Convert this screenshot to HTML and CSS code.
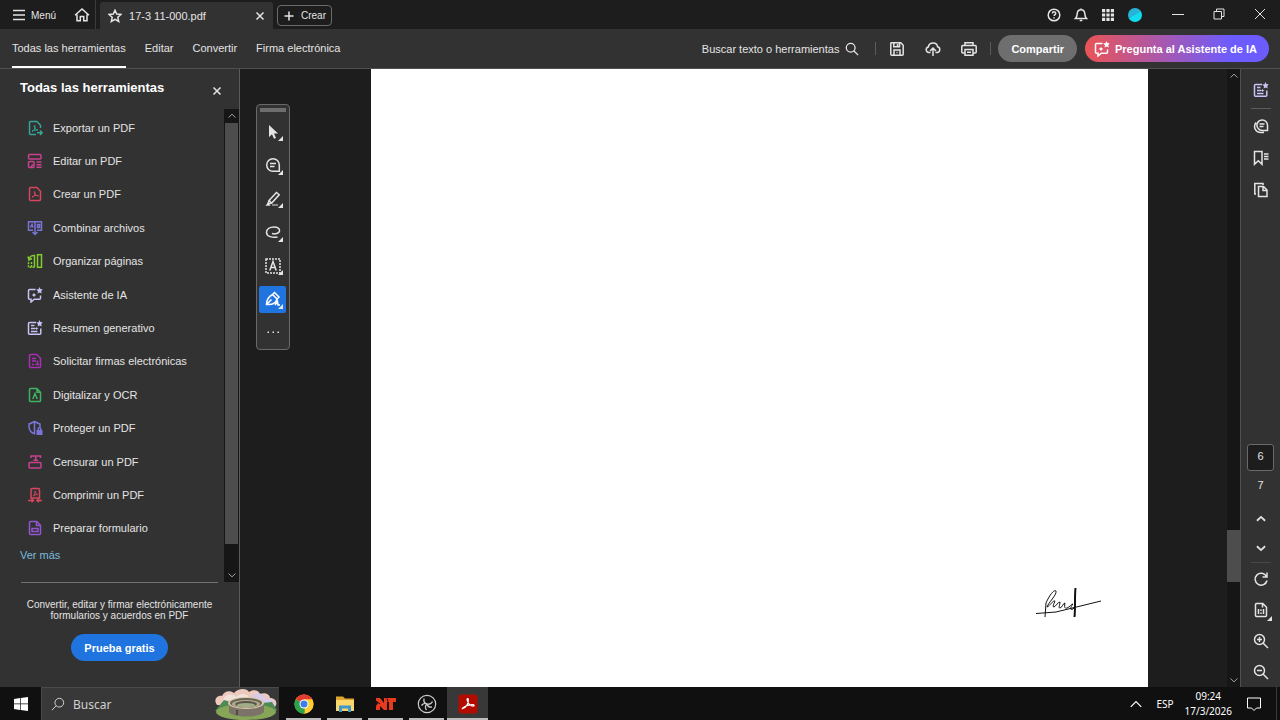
FILE: index.html
```html
<!DOCTYPE html>
<html lang="es">
<head>
  <meta charset="UTF-8" />
  <meta name="viewport" content="width=device-width, initial-scale=1.0" />
  <title>17-3 11-000.pdf</title>
  <link rel="stylesheet" href="styles.css">
</head>
<body>
  <svg class="sprite" aria-hidden="true">
    <symbol id="close" viewBox="0 0 12 12"><path d="M2.5 2.5l7 7M9.5 2.5l-7 7"/></symbol>
    <symbol id="up" viewBox="0 0 12 12"><path d="M2.500 7.500L6 4.200l3.500 3.300"/></symbol>
    <symbol id="down" viewBox="0 0 12 12"><path d="M2.500 4.500L6 7.800l3.500-3.300"/></symbol>
    <symbol id="search" viewBox="0 0 16 16"><circle cx="6.500" cy="6.500" r="5"/><path d="M10 10l5 5"/></symbol>
    <symbol id="pdf" viewBox="0 0 16 16"><path d="M3.500 1.500h6.300l3.700 3.700v8.300a1 1 0 0 1-1 1h-9a1 1 0 0 1-1-1v-11a1 1 0 0 1 1-1z"/><path stroke-width="1" d="M5 11.300c2-.8 3.400-3 3-5.300-.3-1.200-1-.7-.8.3.5 2 1.800 3.500 3.800 3.800.9 0 .5-.9-.6-.8-2 .1-3.600.6-5.400 2z"/></symbol>
    <symbol id="export" viewBox="0 0 16 16"><path d="M13.500 8V5.200L9.800 1.500H3.500a1 1 0 0 0-1 1v11a1 1 0 0 0 1 1H9M10 12.700h5M13 10.500l2.200 2.200-2.200 2.200"/><path stroke-width="1" d="M5 11.300c2-.8 3.400-3 3-5.300-.3-1.200-1-.7-.8.3.5 2 1.800 3.500 3.800 3.800-2-.4-4 .2-6 1.200z"/></symbol>
    <symbol id="edit" viewBox="0 0 16 16"><rect x="1.500" y="1.500" width="12.500" height="4.500" rx="1"/><rect x="1.500" y="8.500" width="5.500" height="6" rx="1"/><path d="M9.500 9h5M9.500 11.700h5M9.500 14.300h5M4 14l2-2.500"/></symbol>
    <symbol id="combine" viewBox="0 0 16 16"><path d="M8 1.800H1.500v8.500H6M8 1.800h6.500v8.500H10M8 1.800v12.700M5.500 12l2.500 2.500 2.500-2.500M3.500 7.500L5 4.500l1 3M10.500 4.500v3h2v-3z"/></symbol>
    <symbol id="organize" viewBox="0 0 16 16"><rect x="10.500" y="1.700" width="4" height="12.600"/><path d="M2 6.500a5 5 0 0 1 5.500-4V14M1 3.500L2 7l3-1.500"/><path stroke-dasharray="2 1" d="M7.500 14.200H1.500V8M4.500 14V8"/></symbol>
    <symbol id="ai" viewBox="0 0 16 16"><path d="M8.500 2.500h-6a1 1 0 0 0-1 1v7.800a1 1 0 0 0 1 1H4V15l3.200-2.700h5.300a1 1 0 0 0 1-1V8.500"/><path class="solid" d="M12.500 0l.9 2.100 2.300.2-1.500 1.700.6 2.400-2.100-1-2.100 1.200.4-2.400L9.200 2.500l2.300-.3zM7 5.800l.8 1.500 1.600.7-1.600.7L7 10.200l-.8-1.500L4.600 8l1.600-.7z"/></symbol>
    <symbol id="summary" viewBox="0 0 16 16"><path d="M9 2.500H2.500a1 1 0 0 0-1 1v9.800a1 1 0 0 0 1 1h10.300a1 1 0 0 0 1-1V8.500M4 5.500h3.500M4 8.500h4M4 11.500h6.500"/><path class="solid" d="M12.500 0l.9 2.100 2.300.2-1.500 1.700.6 2.400-2.100-1-2.100 1.200.4-2.400L9.200 2.500l2.300-.3zM9.500 7l.8 1 1.200.5-1.200.5-.8 1-.8-1-1-.5 1-.5z"/></symbol>
    <symbol id="sign" viewBox="0 0 16 16"><path d="M3.500 1.500h6.300l3.700 3.700v8.300a1 1 0 0 1-1 1h-9a1 1 0 0 1-1-1v-11a1 1 0 0 1 1-1zM5 5.500h4M5 8h4M5 11.500h2M8.500 11.500H12M10.500 7.500V12"/></symbol>
    <symbol id="ocr" viewBox="0 0 16 16"><path d="M3.500 1.500h6.300l3.700 3.700v8.300a1 1 0 0 1-1 1h-9a1 1 0 0 1-1-1v-11a1 1 0 0 1 1-1zM10 1.500v3.700h3.500M5.800 12L8 6.500l2.200 5.500"/></symbol>
    <symbol id="protect" viewBox="0 0 16 16"><path d="M8 14C3.500 12.500 2 10 2 6.500V4C4 3.500 5.500 2.500 7.500 1.500 9.500 2.500 11 3.500 13 4v3M7.500 1.500V14M11.200 10.500V9a1.300 1.300 0 0 1 2.600 0v1.500"/><path class="solid" d="M9.500 10h6v5h-6z"/></symbol>
    <symbol id="redact" viewBox="0 0 16 16"><rect x="2" y="8.500" width="12" height="5.500" rx="1"/><path d="M4 4V2h9.500v2M8.700 2v4.500M6.500 6.200h4.500"/></symbol>
    <symbol id="compress" viewBox="0 0 16 16"><path d="M4 11V2.500a1 1 0 0 1 1-1h6.500a1 1 0 0 1 1 1V11zM1 13.500h5M15 13.500h-5M4.500 11.800l2 1.700-2 1.700M12 11.800l-2 1.700 2 1.700"/><path stroke-width="1" d="M6 9c1.500-.8 2.300-2.500 2-5 .3 2 1.300 3.200 2.600 3.500-1.600 0-3.200.5-4.600 1.500z"/></symbol>
    <symbol id="form" viewBox="0 0 16 16"><path d="M3.500 1.500h6.300l3.700 3.700v8.300a1 1 0 0 1-1 1h-9a1 1 0 0 1-1-1v-11a1 1 0 0 1 1-1zM9.500 1.500v4h4"/><rect x="5" y="8.500" width="6" height="3"/></symbol>
  </svg>

  <header class="titlebar">
    <button class="menu-btn">
      <svg class="icon" viewBox="0 0 14 14"><path d="M1 2.500h12M1 7h12M1 11.500h12"/></svg>Menú
    </button>
    <button class="home-btn" aria-label="Inicio">
      <svg class="icon" viewBox="0 0 16 16"><path d="M1 8.300L8 2l7 6.300M3 7.500v6.300h3.300V9.500h3.400v4.300H13V7.500"/></svg>
    </button>
    <div class="tab">
      <svg class="icon" viewBox="0 0 14 14"><path d="M7 1.200l1.700 3.900 4.300.4-3.200 2.800.9 4.200L7 10.300l-3.700 2.200.9-4.200L1 5.500l4.300-.4z"/></svg>
      <span>17-3 11-000.pdf</span>
      <button aria-label="Cerrar pestaña"><svg class="icon small" viewBox="0 0 12 12"><use href="#close"/></svg></button>
    </div>
    <button class="create-btn">
      <svg class="icon small" viewBox="0 0 12 12"><path d="M6 1.500v9M1.500 6h9"/></svg>Crear
    </button>
    <div class="title-actions">
      <button aria-label="Ayuda"><svg class="icon" viewBox="0 0 14 14"><circle cx="7" cy="7" r="5.800"/><path d="M5.400 5.500c0-2.200 3.300-2.200 3.300-.1 0 1.200-1.600 1.300-1.600 2.600M7 9.300v1.200"/></svg></button>
      <button aria-label="Notificaciones"><svg class="icon" viewBox="0 0 14 14"><path d="M1.500 10.500c1.500-1.300 1.500-3 1.700-5C3.500 3 5 1.700 7 1.700s3.500 1.300 3.800 3.800c.2 2 .2 3.700 1.700 5zM5.700 12.500h2.600M7 .5v1"/></svg></button>
      <button aria-label="Aplicaciones"><svg class="icon" viewBox="0 0 14 14"><path class="solid" d="M1 1h3.200v3.200H1zM5.400 1h3.200v3.200H5.400zM9.800 1H13v3.200H9.800zM1 5.400h3.200v3.200H1zM5.400 5.400h3.200v3.200H5.400zM9.800 5.400H13v3.200H9.800zM1 9.800h3.200V13H1zM5.400 9.800h3.200V13H5.400zM9.800 9.800H13V13H9.800z"/></svg></button>
      <button aria-label="Cuenta"><span class="avatar"></span></button>
    </div>
    <div class="window-actions">
      <button aria-label="Minimizar"><svg class="icon thin" viewBox="0 0 14 14"><path d="M1 7.500h12"/></svg></button>
      <button aria-label="Restaurar"><svg class="icon thin" viewBox="0 0 14 14"><path d="M2 4.500h7.500V12H2zM4.500 4.500V2H12v7.500H9.500"/></svg></button>
      <button aria-label="Cerrar"><svg class="icon thin" viewBox="0 0 14 14"><path d="M2 2l10 10M12 2L2 12"/></svg></button>
    </div>
  </header>

  <nav class="toolbar">
    <a class="active" href="#herramientas">Todas las herramientas</a>
    <a href="#editar">Editar</a>
    <a href="#convertir">Convertir</a>
    <a href="#firma">Firma electrónica</a>
    <div class="toolbar-right">
      <button class="find-btn">Buscar texto o herramientas <svg class="icon" viewBox="0 0 16 16"><use href="#search"/></svg></button>
      <span class="sep"></span>
      <div class="file-actions">
        <button aria-label="Guardar"><svg class="icon big" viewBox="0 0 16 16"><path d="M2.500 1.800h9.300l2.400 2.400v9a1 1 0 0 1-1 1H2.800a1 1 0 0 1-1-1V2.500a.7.7 0 0 1 .7-.7zM4.800 2v3.800h5.700V2M5 14V9h6v5M8.500 3v2M7.500 11.500h1"/></svg></button>
        <button aria-label="Subir"><svg class="icon big" viewBox="0 0 16 16"><path d="M5.500 11.500H3.800A2.800 2.800 0 0 1 3.300 6C3.800 3.300 5.700 2 8 2s4.200 1.300 4.600 3.800a2.900 2.900 0 0 1-.5 5.700h-1.600M8 15V7.500M5 10l3-3 3 3"/></svg></button>
        <button aria-label="Imprimir"><svg class="icon big" viewBox="0 0 16 16"><path d="M4 4.500V1.800h8v2.700M4 12H1.800a1 1 0 0 1-1-1V5.500a1 1 0 0 1 1-1h12.400a1 1 0 0 1 1 1V11a1 1 0 0 1-1 1H12M4 8.500h8v5.700H4zM6 11.300h4"/></svg></button>
      </div>
      <span class="sep"></span>
      <button class="pill share">Compartir</button>
      <button class="pill assistant"><svg class="icon big" viewBox="0 0 16 16"><use href="#ai"/></svg>Pregunta al Asistente de IA</button>
    </div>
  </nav>

  <main class="workspace">
    <aside class="sidebar">
      <div class="sidebar-head">
        <h2>Todas las herramientas</h2>
        <button aria-label="Cerrar panel"><svg class="icon small" viewBox="0 0 12 12"><use href="#close"/></svg></button>
      </div>
      <div class="sidebar-body">
        <div class="tools">
          <ul>
            <li><a href="#"><svg class="icon teal" viewBox="0 0 16 16"><use href="#export"/></svg>Exportar un PDF</a></li>
            <li><a href="#"><svg class="icon pink" viewBox="0 0 16 16"><use href="#edit"/></svg>Editar un PDF</a></li>
            <li><a href="#"><svg class="icon red" viewBox="0 0 16 16"><use href="#pdf"/></svg>Crear un PDF</a></li>
            <li><a href="#"><svg class="icon indigo" viewBox="0 0 16 16"><use href="#combine"/></svg>Combinar archivos</a></li>
            <li><a href="#"><svg class="icon lime" viewBox="0 0 16 16"><use href="#organize"/></svg>Organizar páginas</a></li>
            <li><a href="#"><svg class="icon lilac" viewBox="0 0 16 16"><use href="#ai"/></svg>Asistente de IA</a></li>
            <li><a href="#"><svg class="icon lilac" viewBox="0 0 16 16"><use href="#summary"/></svg>Resumen generativo</a></li>
            <li><a href="#"><svg class="icon magenta" viewBox="0 0 16 16"><use href="#sign"/></svg>Solicitar firmas electrónicas</a></li>
            <li><a href="#"><svg class="icon green" viewBox="0 0 16 16"><use href="#ocr"/></svg>Digitalizar y OCR</a></li>
            <li><a href="#"><svg class="icon indigo" viewBox="0 0 16 16"><use href="#protect"/></svg>Proteger un PDF</a></li>
            <li><a href="#"><svg class="icon pink" viewBox="0 0 16 16"><use href="#redact"/></svg>Censurar un PDF</a></li>
            <li><a href="#"><svg class="icon red" viewBox="0 0 16 16"><use href="#compress"/></svg>Comprimir un PDF</a></li>
            <li><a href="#"><svg class="icon violet" viewBox="0 0 16 16"><use href="#form"/></svg>Preparar formulario</a></li>
          </ul>
          <a class="more" href="#">Ver más</a>
        </div>
        <div class="scrollbar">
          <svg class="icon arrow" viewBox="0 0 12 12"><use href="#up"/></svg>
          <div class="thumb"></div>
          <div class="track"></div>
          <svg class="icon arrow" viewBox="0 0 12 12"><use href="#down"/></svg>
        </div>
      </div>
      <div class="promo">
        <p>Convertir, editar y firmar electrónicamente formularios y acuerdos en PDF</p>
        <button class="pill trial">Prueba gratis</button>
      </div>
    </aside>

    <section class="document">
      <div class="quick-tools">
        <span class="grip"></span>
        <button class="has-more" aria-label="Seleccionar"><svg class="icon big" viewBox="0 0 16 16"><path class="solid" d="M4 1v12l3-2.700 2 4.500 2-.9-2-4.400h4z"/></svg></button>
        <button class="has-more" aria-label="Comentar"><svg class="icon big" viewBox="0 0 16 16"><path d="M14.300 14.300H8A6.300 6.300 0 1 1 14.300 8zM5 6.500h6M5 9.500h4.500"/></svg></button>
        <button class="has-more" aria-label="Resaltar"><svg class="icon big" viewBox="0 0 16 16"><path d="M4 9.500l7.500-8 2.700 2.300-7.500 8.200L3 13zM4 9.500l2.700 2.500"/><path class="solid" d="M.5 14.800L3 11.500 5.500 14.800z"/><path stroke="#888" stroke-width="2" d="M7 14h6"/></svg></button>
        <button class="has-more" aria-label="Dibujar"><svg class="icon big" viewBox="0 0 16 16"><path d="M12.500 13c-5 1-11-.5-11-4.500C1.500 5 5 3 9 3c3.500 0 6 1.500 5.500 4S10 10.500 7 9.500"/></svg></button>
        <button class="has-more" aria-label="Texto"><svg class="icon big" viewBox="0 0 16 16"><path stroke-dasharray="2 1" d="M1 1h14v14H1z"/><path d="M4.800 12.500L8 3.500l3.200 9M6 9.500h4"/></svg></button>
        <button class="has-more selected" aria-label="Firmar"><svg class="icon big" viewBox="0 0 16 16"><path d="M1.500 13.500C1.500 9 3 6 7.500 3.500L12 8c-1 4-5 6-10.500 5.500zM7.500 3.500L9.500 1.500 14 6l-2 2M1.500 13.500l5-5M10 14l2.500-3.500.5 3.500h2"/></svg></button>
        <button aria-label="Más"><svg class="icon big" viewBox="0 0 16 16"><path class="solid" d="M2.500 7.500H4V9H2.500zM7.500 7.500H9V9H7.500zM12.500 7.500H14V9h-1.500z"/></svg></button>
      </div>
      <div class="page">
        <svg class="signature" viewBox="0 0 66 34"><path d="M0 26.500L20 25 65 14M9 30l1-14C13 9 18 2 20 4c1 4-8 12-9 16 3-1 6-7 8-6-1 3-3 6-1 6 2-1 4-5 6-5 0 3-2 6 0 6s3-5 5-5c-1 4 0 6 2 5 3-1 4-4 6-4-2 2-4 7 0 5 1-1 2-3 2-5"/><path stroke-width="2" d="M39.500 1c-1 8 0 20-1 29"/></svg>
      </div>
      <div class="scrollbar doc-scroll">
        <svg class="icon arrow" viewBox="0 0 12 12"><use href="#up"/></svg>
        <div class="track"></div>
        <div class="thumb"></div>
        <div class="track rest"></div>
        <svg class="icon arrow" viewBox="0 0 12 12"><use href="#down"/></svg>
      </div>
    </section>

    <aside class="rail">
      <button aria-label="Resumen generativo"><svg class="icon big lilac" viewBox="0 0 16 16"><use href="#summary"/></svg></button>
      <hr>
      <button aria-label="Comentarios"><svg class="icon big" viewBox="0 0 16 16"><path d="M14.500 12.500H9a5.300 5.300 0 1 1 5.500-5.300zM6.500 6h5M6.500 8.500h4M3 4.500C0 8.500 2 14.500 8 14.500h3"/></svg></button>
      <button aria-label="Marcadores"><svg class="icon big" viewBox="0 0 16 16"><path d="M1.500 1.500H9v12.800l-3.700-3.500-3.800 3.500zM11 4h4.500M11 6.500h4.500M11 9h4.500"/></svg></button>
      <button aria-label="Páginas"><svg class="icon big" viewBox="0 0 16 16"><path d="M5.500 4.500h5l3.500 3.500v6.500H5.500zM10 4.500v4h4M3 12H1.800V1.500H10V3"/></svg></button>
      <label class="page-number"><input type="text" value="6" aria-label="Página actual"></label>
      <span class="page-total">7</span>
      <button class="step" aria-label="Página anterior"><svg class="icon" viewBox="0 0 12 12"><use href="#up"/></svg></button>
      <button class="step" aria-label="Página siguiente"><svg class="icon" viewBox="0 0 12 12"><use href="#down"/></svg></button>
      <hr>
      <button class="view" aria-label="Girar"><svg class="icon big" viewBox="0 0 16 16"><path d="M13.500 5.500A6 6 0 1 0 14 9.500M14 1.500v4.500H9.500"/></svg></button>
      <button class="view has-more" aria-label="Tamaño real"><svg class="icon big" viewBox="0 0 16 16"><path d="M3.500 1.500h6.300l3.700 3.700v8.300a1 1 0 0 1-1 1h-9a1 1 0 0 1-1-1v-11a1 1 0 0 1 1-1zM9.500 1.500v4M5.500 7v5M10.500 7v5M8 7.500V9M8 10.500V12"/></svg></button>
      <button class="view" aria-label="Acercar"><svg class="icon big" viewBox="0 0 16 16"><use href="#search"/><path d="M4 6.500h5M6.500 4v5"/></svg></button>
      <button class="view" aria-label="Alejar"><svg class="icon big" viewBox="0 0 16 16"><use href="#search"/><path d="M4 6.500h5"/></svg></button>
    </aside>
  </main>

  <footer class="taskbar">
    <button class="start" aria-label="Inicio"><svg viewBox="0 0 16 16"><path fill="#fff" d="M1 3l6-.9v5.500H1zM7.700 2L15 1v6.600H7.700zM1 8.300h6v5.600L1 13zM7.700 8.300H15V15l-7.300-1z"/></svg></button>
    <label class="task-search">
      <svg class="icon thin flip" viewBox="0 0 16 16"><use href="#search"/></svg>
      <input type="text" placeholder="Buscar" aria-label="Buscar">
      <svg class="stadium" viewBox="0 0 64 33">
        <path fill="#eec9bd" d="M2 17c-4-5 0-10 5-9 2-5 8-6 12-3 4-5 13-5 15-1 4-3 10-2 11 2 6-2 10 1 10 4 6 0 8 5 5 9z"/>
        <path fill="#f2e2dc" d="M8 12c2-6 9-7 13-3 4-4 10-4 13 0l-4 4z"/>
        <path fill="#d8cbea" d="M38 7c6-4 12 0 12 4 8-1 12 4 9 8L35 15z"/>
        <path fill="#4e8a54" d="M0 23l9-11 10 3h28l10-1 5 8-8 7z"/>
        <ellipse cx="31" cy="24" rx="30" ry="8" fill="#86a557"/>
        <path fill="#7b7367" d="M14 15v9c3 6 31 6 35 0v-9z"/>
        <ellipse cx="31" cy="15" rx="18" ry="6" fill="#d6c8ad"/>
        <ellipse cx="31" cy="15" rx="16" ry="5" fill="#6c6658"/>
        <ellipse cx="31" cy="16" rx="14" ry="4" fill="#b5a98f"/>
        <ellipse cx="31" cy="16" rx="11" ry="3" fill="#55554a"/>
        <ellipse cx="31" cy="17" rx="9" ry="2" fill="#a0ad86"/>
        <path stroke="#51483f" stroke-width="2" d="M22 22v5"/>
      </svg>
    </label>
    <div class="apps">
      <button aria-label="Chrome"><svg viewBox="0 0 20 20"><circle cx="10" cy="10" r="9.500" fill="#fc3"/><path fill="#e33b2e" d="M10 10L1.800 5.200a9.500 9.500 0 0 1 16.500.3H10z"/><path fill="#2ba24c" d="M1.800 5.200L10 10l1 9.500A9.500 9.500 0 0 1 1.800 5.200z"/><path fill="#fc3" d="M10 5.500h8.300A9.500 9.500 0 0 1 10 19.500l4-7z"/><circle cx="10" cy="10" r="4.500" fill="#fff"/><circle cx="10" cy="10" r="3.500" fill="#3b7de9"/></svg></button>
      <button aria-label="Explorador"><svg viewBox="0 0 20 20"><path fill="#e0a52c" d="M1 2.500h7l2 2h9v4H1z"/><path fill="#fbd66b" d="M1 6h18v11H1z"/><path fill="#3f96c8" d="M4 18v-6.500h12V18h-3v-3.500H7V18z"/></svg></button>
      <button aria-label="NT"><svg viewBox="0 0 20 20"><path fill="#e83b1e" d="M0 4h4l4 5V4h12v4h-3v8h-4V8h-2v8H8l-4-4v4H0v-4l2-3-2-2z"/><path stroke="#111" d="M0 7l4 3M11 4.500l1 3"/></svg></button>
      <button aria-label="OBS"><svg viewBox="0 0 20 20"><circle cx="10" cy="10" r="8.700" fill="#111" stroke="#ccc" stroke-width="1.200"/><path fill="none" stroke="#ccc" stroke-width="1.300" d="M7 4.500c-.5 3 .5 5 3 5.500 2 .5 4.500-.500 5.500-2.500M10 10c-2 1.500-2 4-.5 6M10 10c-1.500-1-4-.500-5.500 1.500M10 10c.5 2 2.500 3.500 5 3"/></svg></button>
      <button class="current" aria-label="Acrobat"><svg viewBox="0 0 20 20"><rect x=".5" y=".5" width="19" height="19" rx="3" fill="#b30b00"/><path fill="none" stroke="#fff" stroke-width="1.300" d="M4.500 14.500c4-1.500 6-5 5.800-9-.2-1.500-1.500-1-1.200.3.700 3 3.200 6 6.200 6.300 1.200 0 1-1.400-.5-1.400-4 0-7 1-10 3.300-.6.500-.7.800-.3.500z"/></svg></button>
    </div>
    <div class="tray">
      <button aria-label="Iconos ocultos"><svg class="icon thin" viewBox="0 0 12 12"><path d="M1.500 8.500L6 4l4.500 4.500"/></svg></button>
      <span class="lang">ESP</span>
      <div class="clock"><span>09:24</span><span>17/3/2026</span></div>
      <button class="notices" aria-label="Centro de actividades"><svg class="icon thin" viewBox="0 0 16 16"><path d="M1.500 2h13v10h-4L8 14.500 5.500 12h-4z"/></svg></button>
    </div>
  </footer>
</body>
</html>
```
FILE: styles.css
```css
* {
  box-sizing: border-box;
}
body {
  margin: 0;
  height: 100vh;
  display: flex;
  flex-direction: column;
  overflow: hidden;
  background: #1d1d1d;
  color: #e4e4e4;
  font-family: "Liberation Sans", Arial, sans-serif;
  font-size: 11px;
}
button {
  display: flex;
  align-items: center;
  justify-content: center;
  padding: 0;
  border: none;
  background: none;
  color: inherit;
  font: inherit;
  cursor: pointer;
}
a {
  color: inherit;
  text-decoration: none;
}
.sprite {
  display: none;
}
.icon {
  width: 14px;
  height: 14px;
  flex: none;
  fill: none;
  stroke: currentColor;
  stroke-width: 1.5;
}
.icon.small {
  width: 12px;
  height: 12px;
}
.icon.big {
  width: 16px;
  height: 16px;
}
.icon.thin {
  stroke-width: 1;
}
.solid {
  fill: currentColor;
  stroke: none;
}

/* title bar */
.titlebar {
  display: flex;
  height: 29px;
  flex: none;
  padding-left: 12px;
}
.menu-btn {
  gap: 5px;
  font-size: 10px;
}
.titlebar > button,
.title-actions button,
.window-actions button {
  height: 30px;
}
.home-btn {
  width: 27px;
  margin: 0 4px 0 13px;
}
.home-btn .icon {
  width: 16px;
  height: 16px;
}
.tab {
  display: flex;
  align-items: center;
  width: 173px;
  height: 27px;
  margin-top: 2px;
  padding: 0 7px 0 8px;
  border-radius: 3px 3px 0 0;
  background: #323232;
}
.home-btn {
  border-right: 1px solid #3c3c3c;
}
.tab span {
  flex: 1;
  margin-left: 7px;
}
.titlebar > .create-btn {
  gap: 6px;
  width: 55px;
  height: 21px;
  margin: 5px 0 0 4px;
  border: 1px solid #6a6a6a;
  border-radius: 4px;
  font-size: 10px;
}
.title-actions {
  display: flex;
  margin-left: auto;
}
.title-actions button {
  width: 27px;
}
.avatar {
  width: 14px;
  height: 14px;
  border-radius: 50%;
  background: linear-gradient(150deg, #28b4d8 50%, #12dcf0 50%);
}
.window-actions {
  display: flex;
  margin-left: 9px;
}
.window-actions button {
  width: 41px;
  height: 28px;
}

/* main toolbar */
.toolbar {
  display: flex;
  gap: 19px;
  height: 40px;
  flex: none;
  padding: 0 11px 0 12px;
  border-bottom: 1px solid #505050;
  background: #323232;
}
.toolbar > a {
  display: flex;
  align-items: center;
  border-bottom: 2px solid transparent;
}
.toolbar > a.active {
  border-color: #fff;
}
.toolbar-right {
  display: flex;
  align-items: center;
  margin-left: auto;
}
.find-btn {
  gap: 6px;
}
.sep {
  width: 1px;
  height: 13px;
  margin: 0 13px 0 16px;
  background: #5c5c5c;
}
.file-actions {
  display: flex;
  gap: 20px;
}
.file-actions + .sep {
  margin: 0 7px 0 13px;
}
.pill {
  height: 27px;
  border-radius: 14px;
  color: #fff;
  font-weight: bold;
}
.share {
  padding: 0 13px;
  background: #6e6e6e;
}
.assistant {
  gap: 5px;
  margin-left: 8px;
  padding: 0 12px 0 9px;
  background: linear-gradient(90deg, #ea5455, #6c5cff 80%);
}

/* tools panel */
.workspace {
  display: flex;
  flex: 1;
  min-height: 0;
}
.sidebar {
  display: flex;
  flex-direction: column;
  width: 240px;
  flex: none;
  border-right: 1px solid #5a5a5a;
  background: #323232;
}
.sidebar-head {
  display: flex;
  align-items: center;
  justify-content: space-between;
  height: 40px;
  padding: 0 16px 0 20px;
}
.sidebar-head h2 {
  margin: 0;
  padding-bottom: 4px;
  color: #fff;
  font-size: 13px;
}
.sidebar-head button {
  padding-top: 3px;
}
.sidebar-body {
  display: flex;
  flex: 1;
  min-height: 0;
}
.tools {
  display: flex;
  flex-direction: column;
  flex: 1;
  padding: 2px 0 17px 20px;
}
.tools ul {
  display: flex;
  flex-direction: column;
  flex: 1;
  margin: 0;
  padding: 0;
  list-style: none;
}
.tools li {
  display: flex;
  flex: 1;
}
.tools li a {
  display: flex;
  align-items: center;
  gap: 10px;
  padding-left: 7px;
}
.tools .icon {
  width: 16px;
  height: 16px;
}
.more {
  height: 20px;
  line-height: 20px;
  color: #78bbdc;
}
.teal { color: #35a598; }
.pink { color: #c9408f; }
.red { color: #d6475f; }
.indigo { color: #7b74d8; }
.lime { color: #83cc2e; }
.lilac { color: #c6c4f4; }
.magenta { color: #a82fb4; }
.green { color: #3db560; }
.violet { color: #9256d0; }

.scrollbar {
  display: flex;
  flex-direction: column;
  width: 15px;
  background: #161616;
  color: #a0a0a0;
}
.arrow {
  width: 12px;
  margin: 0 auto;
  stroke-width: 1;
}
.thumb {
  flex: 1;
  width: 13px;
  margin: 0 auto;
  background: #4d4d4d;
}
.scrollbar .track {
  height: 24px;
}
.promo {
  height: 105px;
  margin: 0 21px;
  padding-top: 16px;
  border-top: 1px solid #707070;
  text-align: center;
}
.promo p {
  margin: 0 0 13px;
  font-size: 10px;
  line-height: 11px;
}
.trial {
  margin: 0 auto;
  padding: 0 13px;
  background: #1f74e0;
}

/* document */
.document {
  position: relative;
  display: flex;
  flex: 1;
  padding-left: 131px;
}
.page {
  display: flex;
  align-items: flex-end;
  justify-content: flex-end;
  flex: 1;
  padding: 0 46px 66px 0;
  background: #fff;
}
.signature {
  width: 66px;
  height: 34px;
  fill: none;
  stroke: #111;
  stroke-width: 1;
}
.doc-scroll {
  width: 13px;
  margin-left: 79px;
}
.doc-scroll .track {
  flex: 1;
}
.doc-scroll .thumb {
  flex: none;
  height: 52px;
}
.doc-scroll .rest {
  flex: none;
  height: 91px;
}
.quick-tools {
  position: absolute;
  top: 35px;
  left: 16px;
  display: flex;
  flex-direction: column;
  justify-content: space-between;
  width: 34px;
  height: 246px;
  padding: 3px 2px;
  border: 1px solid #6a6a6a;
  border-radius: 4px;
  background: #323232;
}
.grip {
  height: 4px;
  margin: 0 1px;
  background: #6e6e6e;
}
.quick-tools button {
  width: 27px;
  height: 27px;
  border-radius: 2px;
}
.quick-tools .selected {
  background: #1f74e0;
  color: #fff;
}
.has-more {
  position: relative;
}
.has-more::after {
  content: "";
  position: absolute;
  right: 3px;
  bottom: 4px;
  border-left: 5px solid transparent;
  border-bottom: 5px solid #e4e4e4;
}

/* right rail */
.rail {
  display: flex;
  flex-direction: column;
  align-items: center;
  width: 40px;
  flex: none;
  padding-top: 5px;
  border-left: 1px solid #505050;
  background: #323232;
}
.rail button {
  width: 28px;
  height: 32px;
}
.rail hr {
  width: 20px;
  margin: 2px 0 1px;
  border: none;
  border-top: 1px solid #5c5c5c;
}
.page-number {
  margin-top: auto;
}
.page-number input {
  display: block;
  width: 27px;
  height: 27px;
  padding: 0 0 4px;
  border: 1px solid #6a6a6a;
  border-radius: 3px;
  background: #1d1d1d;
  color: #e4e4e4;
  font: inherit;
  text-align: center;
}
.page-total {
  height: 33px;
  line-height: 29px;
}
.rail .step {
  height: 29px;
}
.rail .step + hr {
  margin: 0;
  border-color: #484848;
}
.rail .view {
  height: 31px;
}

/* taskbar */
.taskbar {
  display: flex;
  height: 33px;
  flex: none;
  background: #101010;
  font-family: "Noto Sans", "Open Sans", sans-serif;
}
.start {
  width: 41px;
}
.start svg {
  width: 16px;
  height: 16px;
}
.task-search {
  display: flex;
  align-items: center;
  width: 238px;
  padding-left: 9px;
  border: 1px solid #4a4a4a;
  border-width: 1px 0 0 1px;
  background: #383838;
}
.task-search input {
  flex: 1;
  min-width: 0;
  margin-left: 8px;
  padding: 0;
  border: none;
  background: none;
  color: #e4e4e4;
  font: 12px "Noto Sans", "Open Sans", sans-serif;
}
.task-search input::placeholder {
  color: #d0d0d0;
}
.flip {
  transform: scaleX(-1);
}
.stadium {
  width: 64px;
  height: 33px;
}
.apps {
  display: flex;
  margin-left: 4px;
}
.apps button {
  width: 41px;
  border: 3px solid transparent;
  border-width: 0 3px;
  background: linear-gradient(#bcbcbc, #bcbcbc) bottom / 100% 2px no-repeat padding-box;
}
.apps .current {
  border: none;
  background: linear-gradient(#bcbcbc, #bcbcbc) bottom / 100% 2px no-repeat #383838;
}
.apps svg {
  width: 20px;
  height: 20px;
}
.tray {
  display: flex;
  align-items: center;
  margin-left: auto;
  color: #fff;
  font-size: 10px;
}
.lang {
  margin: 0 11px 0 13px;
}
.clock {
  display: flex;
  flex-direction: column;
  align-items: center;
  line-height: 15px;
}
.notices {
  width: 45px;
  height: 100%;
  margin-right: 3px;
  border-right: 1px solid #3c3c3c;
}
.notices .icon {
  width: 16px;
  height: 16px;
}
```
